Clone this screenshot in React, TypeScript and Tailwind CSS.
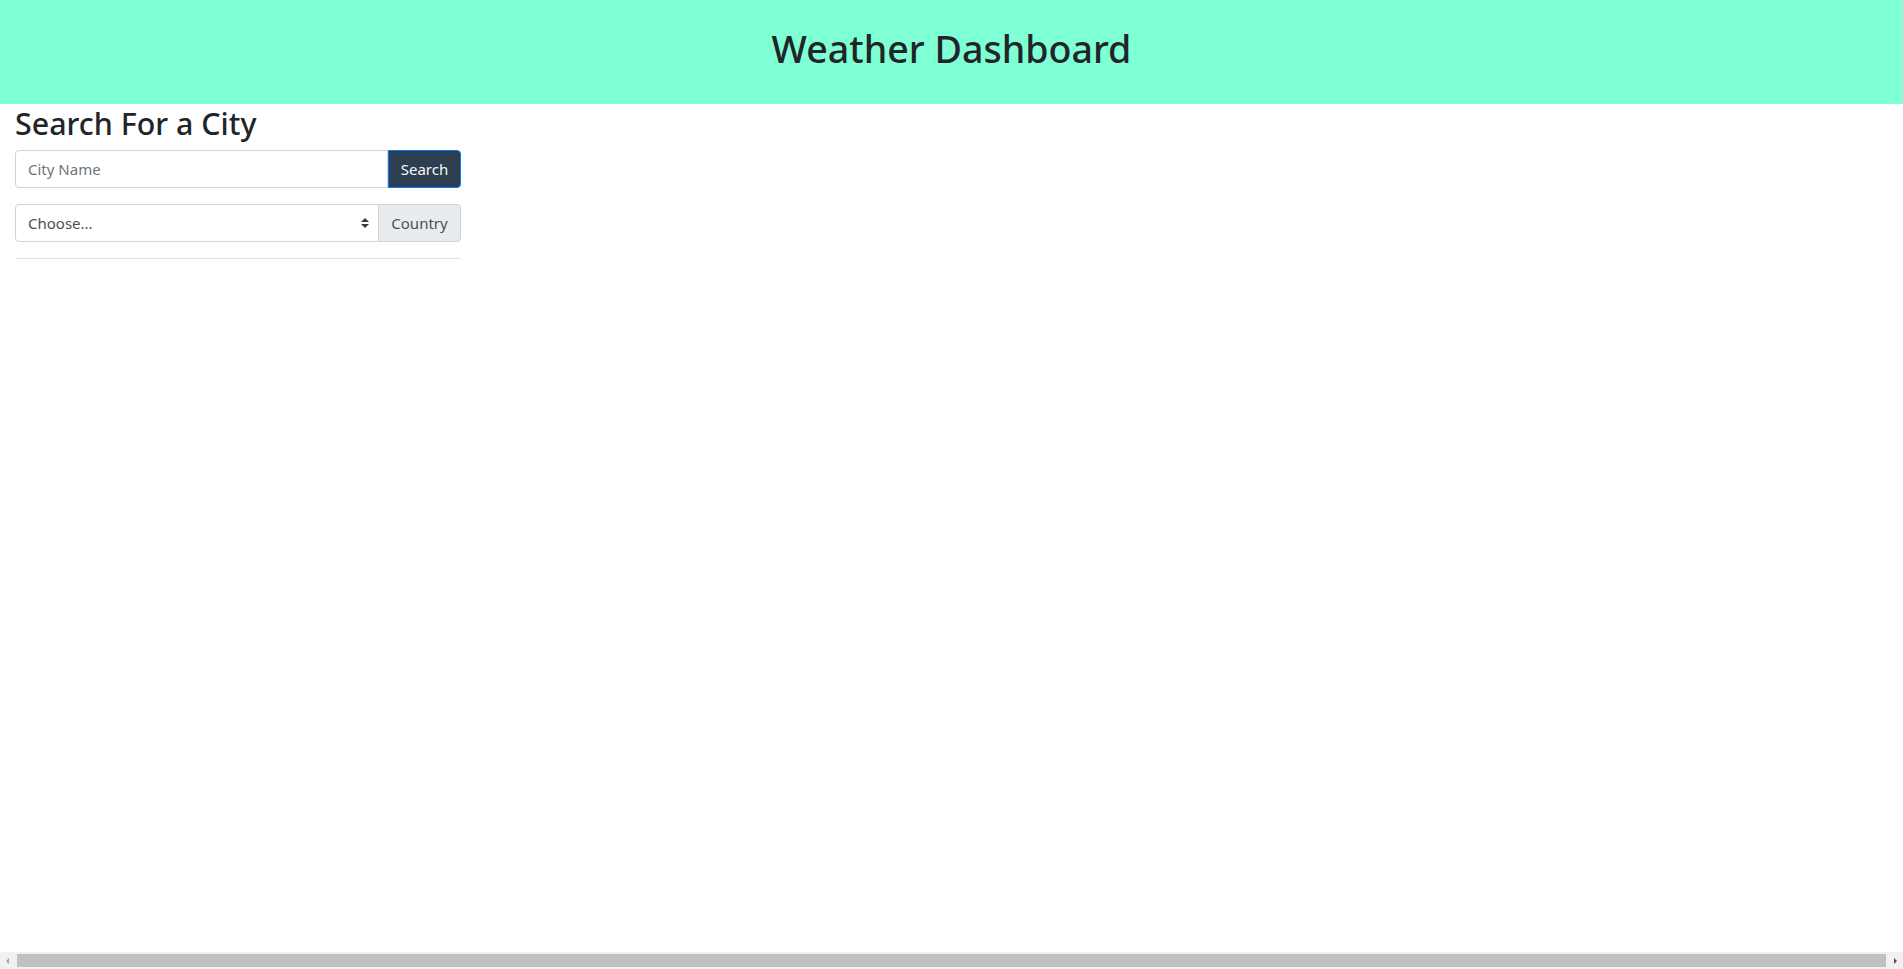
export default function App() {
  return (
    <div className="h-screen flex flex-col bg-white text-[#212529] font-['Noto_Sans',sans-serif] overflow-hidden">
      {/* Header */}
      <header className="h-[104px] shrink-0 bg-[#7fffd4] flex items-center justify-center pb-[6px]">
        <h1 className="text-[37.6px] font-medium leading-[1.2]">Weather Dashboard</h1>
      </header>

      {/* Search column */}
      <div className="flex-1 flex">
        <div className="w-[476px] px-[15px]">
          <h2 className="text-[30.4px] font-medium leading-[1.2] mt-[2px] mb-[8px]">Search For a City</h2>

          <div className="flex h-[38px]">
            <input
              type="text"
              placeholder="City Name"
              className="flex-1 min-w-0 border border-[#ced4da] rounded-l-[4px] px-3 text-[15px] text-[#495057] placeholder:text-[#6c757d] outline-none"
            />
            <button className="w-[73px] bg-[#2c3e50] text-[#f8f9fa] text-[15px] border border-[#007bff] rounded-r-[4px]">
              Search
            </button>
          </div>

          <div className="flex h-[38px] mt-[16px]">
            <div className="flex-1 flex items-center justify-between border border-[#ced4da] rounded-l-[4px] pl-3 pr-[9px] text-[15px] text-[#495057]">
              <span>Choose...</span>
              <svg width="8" height="10" viewBox="0 0 8 10">
                <path d="M4 0 L8 4 L0 4 Z" fill="#343a40" />
                <path d="M0 6 L8 6 L4 10 Z" fill="#343a40" />
              </svg>
            </div>
            <div className="w-[82px] flex items-center justify-center bg-[#e9ecef] border border-l-0 border-[#ced4da] rounded-r-[4px] text-[15px] text-[#495057]">
              Country
            </div>
          </div>

          <hr className="mt-[16px] border-t border-[#dee2e6]" />
        </div>
      </div>

      {/* Horizontal scrollbar */}
      <div className="h-[17px] shrink-0 bg-[#f1f1f1] flex items-center px-[2px] gap-[3px]">
        <svg width="12" height="12" viewBox="0 0 12 12">
          <path d="M7 3 L4 6 L7 9 Z" fill="#a3a3a3" />
        </svg>
        <div className="flex-1 h-[13px] bg-[#c1c1c1]" />
        <svg width="12" height="12" viewBox="0 0 12 12">
          <path d="M5 3 L8 6 L5 9 Z" fill="#505050" />
        </svg>
      </div>
    </div>
  );
}
